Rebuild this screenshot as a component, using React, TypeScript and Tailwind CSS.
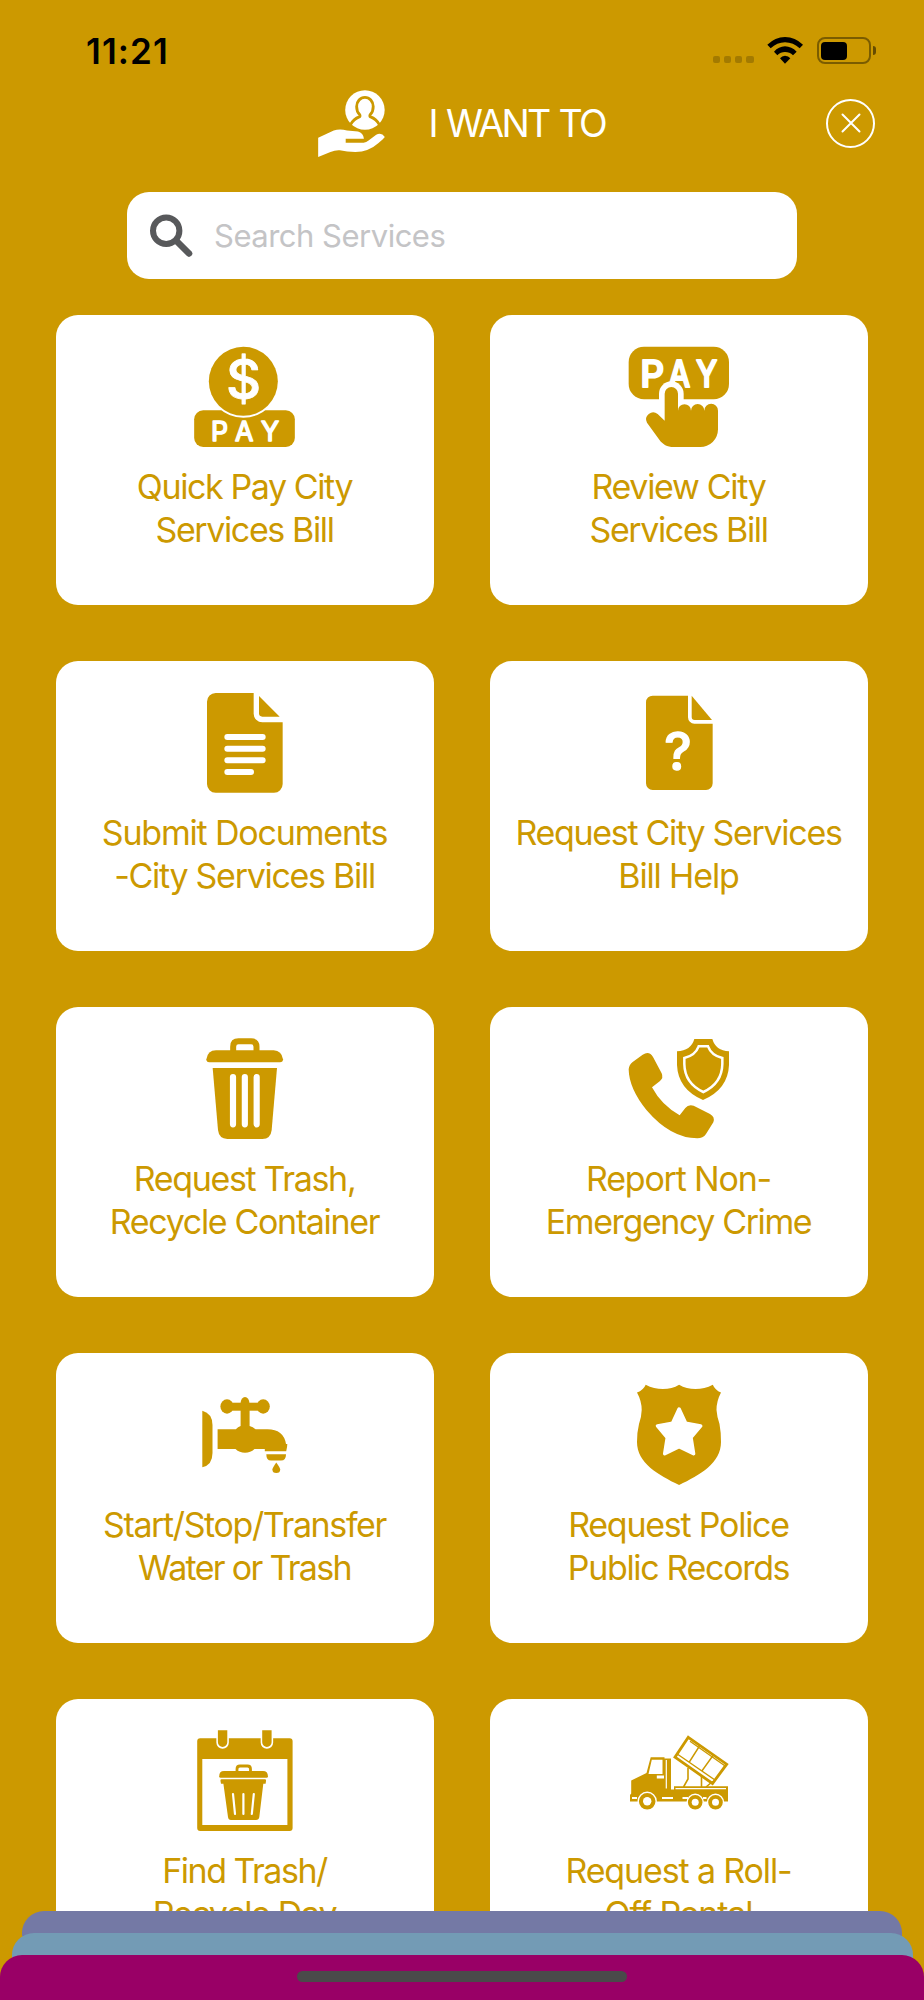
import type { ReactNode } from "react";

const GOLD = "#cc9900";
const ICON_FONT = "Inter, sans-serif";

function QuickPayIcon() {
  return (
    <svg viewBox="465 141 300 300" className="h-[100px] w-[100px] overflow-visible" fill={GOLD}>
      <rect x="462.500" y="331" width="302" height="110" rx="27" />
      <circle cx="610" cy="244" r="109" fill="#fff" />
      <circle cx="610" cy="244" r="103.500" />
      <text x="611" y="298" textAnchor="middle" fontFamily={ICON_FONT} fontSize="163" fontWeight="500" fill="#fff" stroke="#fff" strokeWidth="2.500" strokeLinejoin="round">$</text>
      <g fontFamily={ICON_FONT} fontSize="80" fontWeight="400" fill="#fff" stroke="#fff" strokeWidth="4.500" strokeLinejoin="round" textAnchor="middle">
        <text x="538.500" y="424">P</text>
        <text x="612.500" y="424">A</text>
        <text x="690" y="424">Y</text>
      </g>
    </svg>
  );
}

function TapToPayIcon() {
  return (
    <svg viewBox="447 141 300 300" className="h-[100px] w-[100px] overflow-visible" fill={GOLD}>
      <rect x="446" y="140" width="301" height="158" rx="46" />
      <g fontFamily={ICON_FONT} fontSize="112" fontWeight="500" fill="#fff" stroke="#fff" strokeWidth="6" strokeLinejoin="round" textAnchor="middle">
        <text x="517" y="261">P</text>
        <text x="598" y="261" textLength="66" lengthAdjust="spacingAndGlyphs">A</text>
        <text x="680" y="261" textLength="64" lengthAdjust="spacingAndGlyphs">Y</text>
      </g>
      <path fill="#fff" d="M537 300V281a37 37 0 0 1 74 0v19z" />
      <path d="M554 362V281a20 20 0 0 1 40 0v51a19.500 19.500 0 0 1 39 0a20 20 0 0 1 40 0a20.500 20.500 0 0 1 41 0v56a53 53 0 0 1-54 53h-80c-18 0-32-8-42-22l-37-51a21 21 0 0 1 32-26z" />
    </svg>
  );
}

function DocumentIcon() {
  return (
    <svg viewBox="465 129 300 300" className="h-[100px] w-[100px] overflow-visible" fill={GOLD}>
      <path d="M527 129H641v62a26 26 0 0 0 26 26h61v185a26 26 0 0 1-26 26H527a26 26 0 0 1-26-26V155a26 26 0 0 1 26-26z" />
      <path d="M657 138l62 62h-52a10 10 0 0 1-10-10z" />
      <path d="M562 261H668M562 296H668M562 331H668M562 366H633" stroke="#fff" strokeWidth="18" strokeLinecap="round" />
    </svg>
  );
}

function HelpDocumentIcon() {
  return (
    <svg viewBox="447 129 300 300" className="h-[100px] w-[100px] overflow-visible" fill={GOLD}>
      <path d="M518 137H624v65a19 19 0 0 0 19 19h55v179a20 20 0 0 1-20 20H518a20 20 0 0 1-20-20V157a20 20 0 0 1 20-20z" />
      <path d="M635 137l61 73h-52a9 9 0 0 1-9-9z" />
      <text x="594" y="359" textAnchor="middle" fontFamily={ICON_FONT} fontSize="156" fontWeight="500" fill="#fff" stroke="#fff" strokeWidth="4" strokeLinejoin="round">?</text>
    </svg>
  );
}

function TrashIcon() {
  return (
    <svg viewBox="465 117 300 300" className="h-[100px] w-[100px] overflow-visible" fill={GOLD}>
      <path d="M579.500 156V140q0-16 16-16h38q16 0 16 16v16" fill="none" stroke={GOLD} strokeWidth="18" />
      <path d="M499 178Q503 151 528 151H701Q725 152 729 178Q729 187 720 187H508Q499 187 499 178z" />
      <path d="M518 204H711L695 390Q692 417 667 417H562Q537 416 534 390z" />
      <path d="M579 231V373M614.500 231V373M650 231V373" stroke="#fff" strokeWidth="18.500" strokeLinecap="round" />
    </svg>
  );
}

function CrimeReportIcon() {
  return (
    <svg viewBox="447 117 300 300" className="h-[100px] w-[100px] overflow-visible" fill={GOLD}>
      <path d="M458 186L488 164Q508 152 519 171L545 220Q551 234 540 243L516 262Q544 315 599 346L616 324Q625 312 641 317L690 342Q706 351 700 367L678 402Q669 415 652 415Q572 415 500 331Q447 266 446 208Q447 195 458 186z" />
      <path d="M643 117H697Q707 152 747 154V195Q744 268 669 300Q594 268 591 195V154Q633 152 643 117z" />
      <path d="M656 139H684Q694 166 727 174V192Q726 250 670 276Q614 250 613 192V174Q646 166 656 139z" fill="none" stroke="#fff" strokeWidth="7.500" />
    </svg>
  );
}

function FaucetIcon() {
  return (
    <svg viewBox="195 1385 100 100" className="h-[100px] w-[100px] overflow-visible" fill={GOLD}>
      <path d="M202.300 1410.700Q212.500 1413.500 212.500 1425V1453Q212.500 1465 202.300 1467.300z" />
      <ellipse cx="227" cy="1406.500" rx="6.600" ry="7.200" />
      <ellipse cx="263.200" cy="1406.500" rx="6.600" ry="7.200" />
      <rect x="229" y="1402.700" width="32" height="8" />
      <ellipse cx="245" cy="1403" rx="4.400" ry="6" />
      <path d="M240.600 1410V1426Q238 1427 235.800 1429.300H217.600V1449H235.500Q239.500 1452.800 245 1452.800T254.500 1449H264.800V1451.200H286.200Q287.300 1447 287.300 1444H286Q283.500 1429.300 267.500 1429.300H255.500Q253 1427 249.600 1426V1410z" />
      <path d="M266.300 1454.200H286Q286 1460.600 281 1460.600H271Q266.300 1460.600 266.300 1454.200z" />
      <path d="M276.300 1462.500Q280.200 1468 280.200 1469.500A3.900 3.500 0 0 1 272.400 1469.500Q272.400 1468 276.300 1462.500z" />
    </svg>
  );
}

function BadgeIcon() {
  return (
    <svg viewBox="629 1385 100 100" className="h-[100px] w-[100px] overflow-visible" fill={GOLD}>
      <path d="M645.700 1384.700Q654 1389 662.900 1389Q672 1389 679.100 1384.700Q686.500 1389 695.500 1389Q704.500 1389 712.800 1384.700Q715 1390 721 1392.500Q716.500 1401 716.500 1410Q717 1417 719.500 1424Q721 1432 721 1442C721 1463 700 1475 679.100 1485C658.500 1475 637 1463 637 1442Q637 1432 639 1424Q641.500 1417 641.700 1410Q641.700 1401 637 1392.500Q643.500 1390 645.700 1384.700z" />
      <path d="M679.100 1409L685.700 1423.200L700.700 1425.900L691 1437.500L693.600 1453.700L679.100 1446.600L664.700 1453.700L667.300 1437.500L657.500 1425.900L672.500 1423.200z" fill="#fff" stroke="#fff" strokeWidth="3.500" strokeLinejoin="round" />
    </svg>
  );
}

function TrashCalendarIcon() {
  return (
    <svg viewBox="195 1731 100 100" className="h-[100px] w-[100px] overflow-visible" fill={GOLD}>
      <path fillRule="evenodd" d="M200.200 1738.300H289.600a3 3 0 0 1 3 3V1828a3 3 0 0 1-3 3H200.200a3 3 0 0 1-3-3V1741.300a3 3 0 0 1 3-3zM202.300 1759V1825H287.400V1759z" />
      <path d="M222.600 1730V1742.500M266.900 1730V1742.500" stroke="#fff" strokeWidth="12.500" strokeLinecap="round" />
      <path d="M217.900 1730.300h9.400v12a4.700 4.700 0 0 1-9.400 0zM262.200 1730.300h9.400v12a4.700 4.700 0 0 1-9.400 0z" />
      <path d="M237 1772V1769q0-3 3-3h7.500q3 0 3 3V1772" fill="none" stroke={GOLD} strokeWidth="2.800" />
      <path d="M219.200 1776.200Q219.200 1771 224 1771H263Q267.900 1771 267.900 1776.200Q267.900 1777.700 266.500 1777.700H220.600Q219.200 1777.700 219.200 1776.200z" />
      <path d="M221.500 1779.300H265Q266.200 1779.300 266 1781L265.600 1783.700H263.300L259.300 1817Q258.900 1820 256 1820H231Q228.300 1820 228 1817L223.400 1783.700H221L220.500 1781Q220.300 1779.300 221.500 1779.300z" />
      <path d="M233 1794L235 1814M243.400 1794V1814M253.800 1794L251.800 1814" stroke="#fff" strokeWidth="2.200" strokeLinecap="round" />
    </svg>
  );
}

function TruckIcon() {
  return (
    <svg viewBox="629 1731 100 100" className="h-[100px] w-[100px] overflow-visible" fill={GOLD}>
      <path d="M688.300 1737.300L726.700 1764.200L712.500 1783.500L675 1757.200z" fill="none" stroke={GOLD} strokeWidth="2.800" />
      <path d="M676.500 1753.500L715 1780M699.500 1746L689 1762.500M713 1755.500L701.500 1771.500M690 1741.300L725.500 1766.200" stroke={GOLD} strokeWidth="1.400" />
      <path d="M688 1768V1779L683.500 1787M701.500 1776V1787M712 1782L706 1787" stroke={GOLD} strokeWidth="1.600" fill="none" />
      <path d="M630 1801.500V1795L631.200 1793.500V1780.500L646.500 1773L650.700 1757.300H664.500V1758.500H671V1789.500H674V1786.300H728V1801.500z" />
      <path d="M651.800 1759.800H662.500V1774H648.500zM656.800 1775.500H664V1778.500H656.800zM675.500 1788H726V1789.300H675.500zM662 1797H673V1799H662zM682.500 1797H688V1799H682.500zM703 1797H706.500V1799H703zM632 1797H637V1799H632z" fill="#fff" />
      <path d="M666.300 1760V1788.500" stroke="#fff" strokeWidth="1.200" />
      <g stroke="#fff" strokeWidth="1.400">
        <circle cx="647.200" cy="1801.300" r="9" />
        <circle cx="695.200" cy="1802.300" r="8" />
        <circle cx="715.500" cy="1802.300" r="8" />
      </g>
      <g fill="#fff">
        <circle cx="647.200" cy="1801.300" r="4.200" />
        <circle cx="695.200" cy="1802.300" r="3.500" />
        <circle cx="715.500" cy="1802.300" r="3.500" />
      </g>
    </svg>
  );
}

function ServiceHandIcon() {
  return (
    <svg viewBox="773 208 201 202" className="h-[67px] w-[67px]" fill="#fff">
      <circle cx="914" cy="268.500" r="59.500" />
      <path d="M870 313Q880 295 897 289Q901 287 898 282Q889 274 889 258A25 28 0 0 1 939 258Q939 274 930 282Q927 287 931 289Q948 295 958 313" fill="none" stroke={GOLD} strokeWidth="8.500" />
      <path d="M773 352L820 330Q838 324 860 330L893 333Q909 337 911 355H856V367H910Q918 366 925 360L948 343Q964 335 974 350Q970 356 955 368Q925 395 885 395Q860 395 838 390Q825 389 810 395L773 410z" />
    </svg>
  );
}

type Line = { text: string; tracking: string };
type Service = { icon: ReactNode; lines: Line[] };

const services: Service[] = [
  { icon: <QuickPayIcon />, lines: [{ text: "Quick Pay City", tracking: "tracking-[-1.4px]" }, { text: "Services Bill", tracking: "tracking-[-1.38px]" }] },
  { icon: <TapToPayIcon />, lines: [{ text: "Review City", tracking: "tracking-[-1.3px]" }, { text: "Services Bill", tracking: "tracking-[-1.38px]" }] },
  { icon: <DocumentIcon />, lines: [{ text: "Submit Documents", tracking: "tracking-[-1.18px]" }, { text: "-City Services Bill", tracking: "tracking-[-1.29px]" }] },
  { icon: <HelpDocumentIcon />, lines: [{ text: "Request City Services", tracking: "tracking-[-1.31px]" }, { text: "Bill Help", tracking: "tracking-[-1.15px]" }] },
  { icon: <TrashIcon />, lines: [{ text: "Request Trash,", tracking: "tracking-[-1.33px]" }, { text: "Recycle Container", tracking: "tracking-[-1.33px]" }] },
  { icon: <CrimeReportIcon />, lines: [{ text: "Report Non-", tracking: "tracking-[-1.2px]" }, { text: "Emergency Crime", tracking: "tracking-[-1.4px]" }] },
  { icon: <FaucetIcon />, lines: [{ text: "Start/Stop/Transfer", tracking: "tracking-[-1.38px]" }, { text: "Water or Trash", tracking: "tracking-[-1.7px]" }] },
  { icon: <BadgeIcon />, lines: [{ text: "Request Police", tracking: "tracking-[-1.25px]" }, { text: "Public Records", tracking: "tracking-[-1.33px]" }] },
  { icon: <TrashCalendarIcon />, lines: [{ text: "Find Trash/", tracking: "tracking-[-1.5px]" }, { text: "Recycle Day", tracking: "tracking-[-1.3px]" }] },
  { icon: <TruckIcon />, lines: [{ text: "Request a Roll-", tracking: "tracking-[-1.13px]" }, { text: "Off Rental", tracking: "tracking-[-1.15px]" }] },
];

function ServiceCard({ icon, lines }: Service) {
  return (
    <button className="flex h-[290px] flex-col items-center rounded-[22px] bg-white pt-8">
      {icon}
      <span className="mt-[18px] mr-px flex flex-col items-center text-[34px] leading-[43px] whitespace-nowrap text-[#cc9900]">
        {lines.map((line) => (
          <span key={line.text} className={line.tracking}>{line.text}</span>
        ))}
      </span>
    </button>
  );
}

function StatusBar() {
  return (
    <div className="flex h-[27px] items-start justify-between pr-[48px] pl-[86px]">
      <span className="text-[35px] leading-[28px] font-semibold tracking-[1.1px] text-black">11:21</span>
      <div className="flex items-end">
        <div className="flex gap-[3.600px] pb-[1px]">
          <i className="size-[7.500px] rounded-[2px] bg-black/20" />
          <i className="size-[7.500px] rounded-[2px] bg-black/20" />
          <i className="size-[7.500px] rounded-[2px] bg-black/20" />
          <i className="size-[7.500px] rounded-[2px] bg-black/20" />
        </div>
        <svg viewBox="1041 50 108 81" className="ml-[13.500px] h-[27px] w-9" fill="#000">
          <path d="M1042 73Q1065 51 1095 50Q1126 51 1149 73L1139 84Q1120 66 1095 66Q1071 66 1052 84z" />
          <path d="M1062 94Q1076 79 1095 78Q1115 79 1130 94L1119 105Q1109 95 1095 95Q1082 95 1072 105z" />
          <path d="M1080 114Q1086 107 1095 106Q1105 107 1111 114L1095 130z" />
        </svg>
        <div className="ml-[13.500px] flex h-[27px] items-center">
          <div className="h-[27px] w-[54px] rounded-[8px] border-2 border-black/40 p-[2.500px]">
            <div className="h-full w-[26px] rounded-[4px] bg-black" />
          </div>
          <div className="ml-[2px] h-[9px] w-[3.500px] rounded-r-full bg-black/50" />
        </div>
      </div>
    </div>
  );
}

export default function App() {
  return (
    <main className="flex h-[2000px] w-[924px] flex-col overflow-hidden bg-[#cc9900] font-['Inter',sans-serif]">
      <div className="h-[1911px] shrink-0 overflow-hidden pt-[37px]">
        <StatusBar />
        <header className="mt-[25px] flex h-[68px] items-center pl-[317.500px]">
          <ServiceHandIcon />
          <h1 className="ml-[44px] pt-px text-[37.500px] leading-[68px] tracking-[-2.600px] [word-spacing:2px] whitespace-nowrap text-white">I WANT TO</h1>
          <button aria-label="Close" className="mr-[49px] ml-auto flex size-[49px] items-center justify-center rounded-full border-2 border-white">
            <svg viewBox="0 0 20 20" className="size-5" stroke="#fff" strokeWidth="2" strokeLinecap="round">
              <path d="M1.500 1.500l17 17M18.500 1.500l-17 17" />
            </svg>
          </button>
        </header>
        <label className="mx-auto mt-[35px] flex h-[87px] w-[670px] items-center rounded-[22px] bg-white">
          <svg viewBox="0 0 44 44" className="ml-[21.500px] size-11 shrink-0" fill="none" stroke="#58595b" strokeLinecap="round">
            <circle cx="17.200" cy="16.700" r="13.200" strokeWidth="6" />
            <path d="M27.500 27L40 39.500" strokeWidth="6.500" />
          </svg>
          <span className="ml-[21.500px] text-[31px] leading-[36px] tracking-[-0.500px] text-[#c4c4c6]">Search Services</span>
        </label>
        <section className="mt-[36px] grid grid-cols-[378px_378px] justify-center gap-x-[56px] gap-y-[56px]">
          {services.map((service) => (
            <ServiceCard key={service.lines[0].text} {...service} />
          ))}
        </section>
      </div>
      <div className="mx-[22px] -mb-[3px] h-[25px] shrink-0 rounded-t-[22px] bg-[#7479a5]" />
      <div className="mx-[11.500px] -mb-[3px] h-[25px] shrink-0 rounded-t-[22px] bg-[#739bb5]" />
      <footer className="flex flex-1 justify-center rounded-t-[22px] bg-[#990066] pt-4">
        <div className="h-[11px] w-[330px] rounded-full bg-[#4a4a4a]" />
      </footer>
    </main>
  );
}
